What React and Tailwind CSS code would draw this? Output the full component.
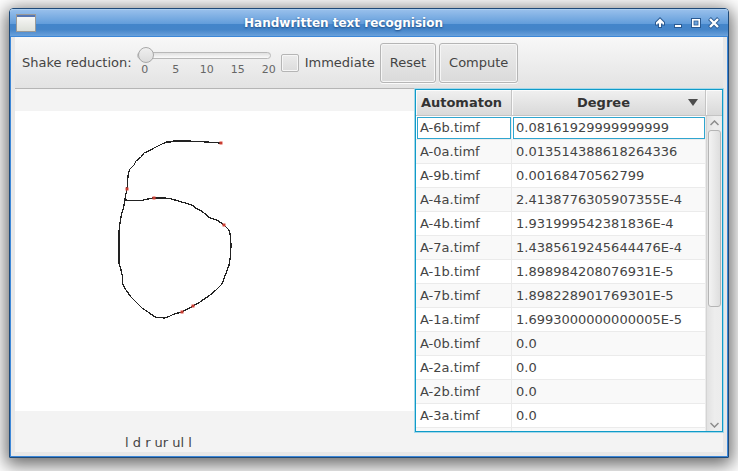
import React, { useState } from "react";

const ROWS = [
  ["A-6b.timf", "0.08161929999999999"],
  ["A-0a.timf", "0.013514388618264336"],
  ["A-9b.timf", "0.00168470562799"],
  ["A-4a.timf", "2.4138776305907355E-4"],
  ["A-4b.timf", "1.931999542381836E-4"],
  ["A-7a.timf", "1.4385619245644476E-4"],
  ["A-1b.timf", "1.898984208076931E-5"],
  ["A-7b.timf", "1.898228901769301E-5"],
  ["A-1a.timf", "1.6993000000000005E-5"],
  ["A-0b.timf", "0.0"],
  ["A-2a.timf", "0.0"],
  ["A-2b.timf", "0.0"],
  ["A-3a.timf", "0.0"],
];

const TICKS = [0, 5, 10, 15, 20];

const MARKS = [
  [221, 143],
  [127, 189],
  [154, 198],
  [224, 225],
  [193, 306],
  [182, 312],
];

function TitleBar() {
  const control = "flex size-[18px] items-center justify-center";
  return (
    <header className="flex h-7 items-center rounded-t-[3px] border-t border-b border-t-[#a9cdf0] border-b-[#3c87d8] bg-[linear-gradient(#97bfeb_0%,#649edb_52%,#4385ca_54%,#4585c9_75%,#6aa1db_100%)] pr-[5px] pl-[6px]">
      <svg width="20" height="18" viewBox="0 0 20 18" aria-hidden="true" className="block">
        <defs>
          <linearGradient id="app" x1="0" y1="0" x2="0" y2="1">
            <stop offset="0" stopColor="#fbfbfa" />
            <stop offset="1" stopColor="#dcdfd8" />
          </linearGradient>
        </defs>
        <rect x="0.5" y="0.5" width="19" height="17" fill="url(#app)" stroke="#9a9a98" />
        <rect x="1" y="1" width="18" height="2" fill="#5577b5" />
      </svg>
      <h1 className="flex-1 text-center text-[12px] leading-4 font-bold text-white [text-shadow:0_1px_2px_#1d4a80]">
        Handwritten text recognision
      </h1>
      <div className="flex w-[72px]">
        <button type="button" aria-label="Shade" className={control}>
          <svg width="12" height="12" viewBox="0 0 12 12">
            <path
              d="M5 10V6.500H3.500V7.500H2V5.500L6 1.500L10 5.500V7.500H8.500V6.500H7V10z"
              fill="#fff"
              stroke="#2a5a92"
              strokeWidth="2"
              paintOrder="stroke"
            />
          </svg>
        </button>
        <button type="button" aria-label="Minimize" className={control}>
          <svg width="12" height="12" viewBox="0 0 12 12">
            <rect x="2" y="7" width="8" height="4" fill="#2a5a92" />
            <rect x="3" y="8" width="6" height="2" fill="#fff" />
          </svg>
        </button>
        <button type="button" aria-label="Maximize" className={control}>
          <svg width="12" height="12" viewBox="0 0 12 12">
            <rect x="1.5" y="1.5" width="9" height="9" fill="none" stroke="#2a5a92" />
            <path d="M2 2h8v8h-8zM4 4v4h4v-4z" fill="#fff" fillRule="evenodd" />
            <rect x="4" y="4" width="4" height="4" fill="#6ea3dc" stroke="#2a5a92" strokeWidth="0.8" />
          </svg>
        </button>
        <button type="button" aria-label="Close" className={control}>
          <svg width="12" height="12" viewBox="0 0 12 12">
            <path d="M1.500 1.500l9 9M10.500 1.500l-9 9" stroke="#2a5a92" strokeWidth="4" />
            <path d="M2 2l8 8M10 2l-8 8" stroke="#fff" strokeWidth="2.4" />
          </svg>
        </button>
      </div>
    </header>
  );
}

function ToolButton({ children }) {
  return (
    <button
      type="button"
      className="h-10 rounded-[3px] border border-[#b5b5b5] bg-linear-to-b from-[#ececec] to-[#dadada] px-[9px] shadow-[inset_0_0_0_1px_#f6f6f6,0_1px_0_#fafafa]"
    >
      {children}
    </button>
  );
}

function Toolbar() {
  const [shake, setShake] = useState(0);
  return (
    <div className="flex h-[52px] items-center border-b border-[#b5b5b5] bg-linear-to-b from-[#f8f8f8] to-[#e3e3e3] pl-[7px]">
      <label htmlFor="shake">Shake reduction:</label>
      <div className="ml-[5px] w-[134px] pb-[2px]">
        <input
          id="shake"
          type="range"
          min="0"
          max="20"
          value={shake}
          onChange={(e) => setShake(Number(e.target.value))}
          className="block h-4 w-full appearance-none bg-transparent [&::-webkit-slider-runnable-track]:h-[7px] [&::-webkit-slider-runnable-track]:rounded-full [&::-webkit-slider-runnable-track]:border [&::-webkit-slider-runnable-track]:border-[#b8b8b8] [&::-webkit-slider-runnable-track]:bg-linear-to-b [&::-webkit-slider-runnable-track]:from-[#e0e0e0] [&::-webkit-slider-runnable-track]:to-[#fafafa] [&::-webkit-slider-thumb]:-mt-[6px] [&::-webkit-slider-thumb]:size-4 [&::-webkit-slider-thumb]:appearance-none [&::-webkit-slider-thumb]:rounded-full [&::-webkit-slider-thumb]:border [&::-webkit-slider-thumb]:border-[#a8a8a8] [&::-webkit-slider-thumb]:bg-linear-to-b [&::-webkit-slider-thumb]:from-[#efefef] [&::-webkit-slider-thumb]:to-[#dcdcdc]"
        />
        <div className="-mr-[6px] flex justify-between text-[11px] leading-3 text-[#666]">
          {TICKS.map((t) => (
            <span key={t} className="flex w-4 justify-center">
              {t}
            </span>
          ))}
        </div>
      </div>
      <label className="ml-[10px] flex items-center gap-[6px]">
        <input
          type="checkbox"
          className="size-[18px] appearance-none rounded-[2px] border border-[#b5b5b5] bg-linear-to-b from-[#ececec] to-[#dcdcdc] shadow-[inset_0_0_0_1px_#f6f6f6] checked:bg-[#9bb8d8]"
        />
        Immediate
      </label>
      <div className="ml-[5px] flex gap-[3px]">
        <ToolButton>Reset</ToolButton>
        <ToolButton>Compute</ToolButton>
      </div>
    </div>
  );
}

function Drawing() {
  return (
    <svg width="400" height="300" viewBox="15 111 400 300" role="img" aria-label="Handwritten digit" className="block">
      <path
        d="M221 143L210 142.500L208 142L194 141.500L190 141L173 141L171 142L167 142L163 143.500L154 148L149 151L144 153L141 157L136 161L134 165L130 169L128.500 173L128 176L127 189L125.500 196L125 199L123.500 208L121.500 214L119.500 226L119 232L119 263L121 270L122.500 277L122.500 284L126 290L131 297L137 303L142 308L148 312L155 317L164 318L168 317L174 314L182 312L193 306L200 302L210 295L216 290L222 284L225 276L229 265L230.500 256L231 245L230.500 236L229 230L224 225L217 220L210 218L204 213L201 210.500L197 209L192 205L187 203.500L180 201.500L175 200L170 198.500L164 198L153 198L148 199L141 200.500L126 200.500V199"
        fill="none"
        stroke="#222"
        strokeWidth="1.3"
        strokeLinejoin="round"
        shapeRendering="crispEdges"
      />
      {MARKS.map(([x, y]) => (
        <g key={`${x}-${y}`}>
          <rect x={x - 1.5} y={y - 1.5} width="3" height="3" fill="#e0483c" />
          <rect x={x - 0.5} y={y - 0.5} width="1" height="1" fill="#7a1d16" />
        </g>
      ))}
    </svg>
  );
}

function ResultTable() {
  const head =
    "h-[26px] border-r border-b border-[#c4c4c4] bg-linear-to-b from-[#f0f0f0] to-[#d9d9d9] p-0 font-bold text-[#333] shadow-[inset_1px_1px_0_#fbfbfb]";
  return (
    <section className="flex h-[343px] w-[308px] border border-[#0f9bc8] bg-white shadow-[0_0_0_1px_#a5d8ea]">
      <div className="flex-1 overflow-hidden">
        <table className="w-full table-fixed border-separate border-spacing-0 text-left">
          <thead>
            <tr>
              <th className={`${head} w-24 text-center`}>
                <div className="pr-[4px]">Automaton</div>
              </th>
              <th className={head}>
                <div className="flex items-center pr-[7px] pl-[7px]">
                  <span className="flex-1 text-center">Degree</span>
                  <svg width="10" height="7" viewBox="0 0 10 7" aria-hidden="true">
                    <path d="M0 0h10L5 7z" fill="#4d4d4d" />
                  </svg>
                </div>
              </th>
            </tr>
          </thead>
          <tbody>
            {ROWS.map(([name, degree], i) => (
              <tr key={name} className="even:bg-[#f9f9f9]">
                {[name, degree].map((text) => (
                  <td key={text} className="h-6 border-r border-b border-[#ebebeb] p-0 pl-px">
                    <div
                      className={
                        i === 0
                          ? "mt-px h-[22px] border border-[#2fa5cf] pl-[2px] leading-5"
                          : "h-[23px] pl-[3px] leading-[23px]"
                      }
                    >
                      {text}
                    </div>
                  </td>
                ))}
              </tr>
            ))}
            <tr className="bg-[#f9f9f9]">
              <td className="h-[3px] border-r border-[#ebebeb] p-0" />
              <td className="h-[3px] border-r border-[#ebebeb] p-0" />
            </tr>
          </tbody>
        </table>
      </div>
      <div className="flex w-4 flex-col">
        <div className="h-[26px] border-b border-[#c4c4c4] bg-linear-to-b from-[#f0f0f0] to-[#d9d9d9] shadow-[inset_1px_1px_0_#fbfbfb]" />
        <div className="flex flex-1 flex-col items-center border-l border-[#d4d4d4] bg-linear-to-r from-[#e2e2e2] via-[#ededed] to-[#ececec]">
          <button type="button" aria-label="Scroll up" className="flex h-[14px] w-full items-center justify-center">
            <svg width="9" height="6" viewBox="0 0 9 6">
              <path d="M0.500 5L4.500 1L8.500 5" fill="none" stroke="#8c8c8c" strokeWidth="1.5" />
            </svg>
          </button>
          <div className="h-[177px] w-[13px] rounded-[3px] border border-[#b5b5b5] bg-linear-to-r from-[#f3f3f3] to-[#dedede]" />
          <button type="button" aria-label="Scroll down" className="mt-auto flex h-[13px] w-full items-center justify-center">
            <svg width="9" height="6" viewBox="0 0 9 6">
              <path d="M0.500 1L4.500 5L8.500 1" fill="none" stroke="#8c8c8c" strokeWidth="1.5" />
            </svg>
          </button>
        </div>
      </div>
    </section>
  );
}

export default function App() {
  return (
    <div className="overflow-hidden bg-white px-[9px] pt-2 pb-[13px] font-['DejaVu_Sans',sans-serif] text-[13px] leading-5 text-[#444]">
      <div className="rounded-t-[4px] border border-[#1f4a78] shadow-[0_4px_18px_3px_rgba(0,0,0,0.6)]">
        <TitleBar />
        <div className="border-x border-b border-[#3c87d8] bg-[#e8e8e8] px-1 pb-1">
          <Toolbar />
          <main className="flex bg-[#f3f3f3]">
            <div className="min-w-0 flex-1 pt-[22px]">
              <div className="overflow-hidden bg-white">
                <Drawing />
              </div>
              <p className="pt-[22px] pl-[110px] leading-[19px]">l d r ur ul l</p>
            </div>
            <ResultTable />
          </main>
        </div>
      </div>
    </div>
  );
}
